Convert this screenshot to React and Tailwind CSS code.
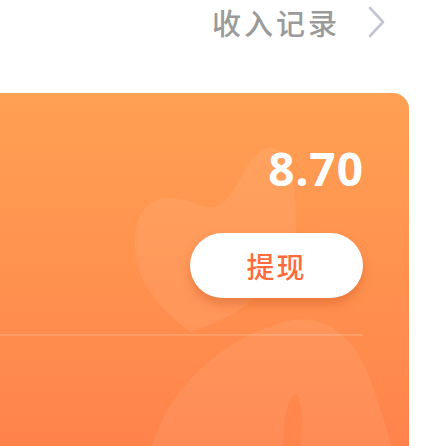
export default function App() {
  return (
    <div className="w-[445px] h-[446px] overflow-hidden bg-white" style={{ fontFamily: '"Noto Sans", "Noto Sans CJK SC", sans-serif' }}>
      <div className="h-[93px] flex items-start justify-end pr-[58px] pt-[2px]">
        <div className="flex items-center h-[40px]">
          <span className="text-[29px] leading-none text-[#9a9a9a] tracking-[3px] font-medium" style={{ fontFamily: '"Noto Sans CJK SC", sans-serif' }}>收入记录</span>
          <svg className="ml-[27px]" width="20" height="34" viewBox="0 0 20 34">
            <path d="M3 3 L16 17 L3 31" fill="none" stroke="#c3c6d1" strokeWidth="2.6" strokeLinecap="round" strokeLinejoin="round" />
          </svg>
        </div>
      </div>
      <div className="relative w-[409px] h-[400px] rounded-tr-[16px] overflow-hidden bg-gradient-to-b from-[#ffa053] to-[#ff7f4a]">
        <svg className="absolute left-0 top-0" width="409" height="360" viewBox="0 0 409 360">
          <path d="M190 239 C160 215 135 190 135 150 C135 118 150 105 170 105 C195 105 205 120 220 112 C240 100 245 60 268 55 C290 52 296 90 296 130 C296 180 250 220 190 239 Z" fill="#ffffff" opacity="0.07" />
          <path d="M150 360 C165 300 215 250 280 230 C330 215 360 250 375 300 C385 330 392 350 392 360 Z" fill="#ffffff" opacity="0.07" />
          <path d="M283 360 C283 330 286 310 293 302 C300 295 303 320 302 345 L300 360 Z" fill="#ff7a3a" opacity="0.35" />
        </svg>
        <div className="relative flex flex-col items-end pr-[45px]">
          <div className="mt-[45px] h-[60px] text-[46px] font-bold leading-[60px] text-white tracking-[1px]" style={{ fontFamily: '"Noto Sans", sans-serif' }}>8.70</div>
          <button className="mt-[35px] mr-[1px] w-[173px] h-[65px] rounded-full bg-white shadow-[0_6px_10px_rgba(190,80,30,0.35)] flex items-center justify-center">
            <span className="text-[28px] text-[#ff6b3d] font-medium tracking-[2px]" style={{ fontFamily: '"Noto Sans CJK SC", sans-serif' }}>提现</span>
          </button>
        </div>
        <div className="relative mt-[36px] w-[363px] h-[2px] bg-white/15"></div>
      </div>
    </div>
  );
}
